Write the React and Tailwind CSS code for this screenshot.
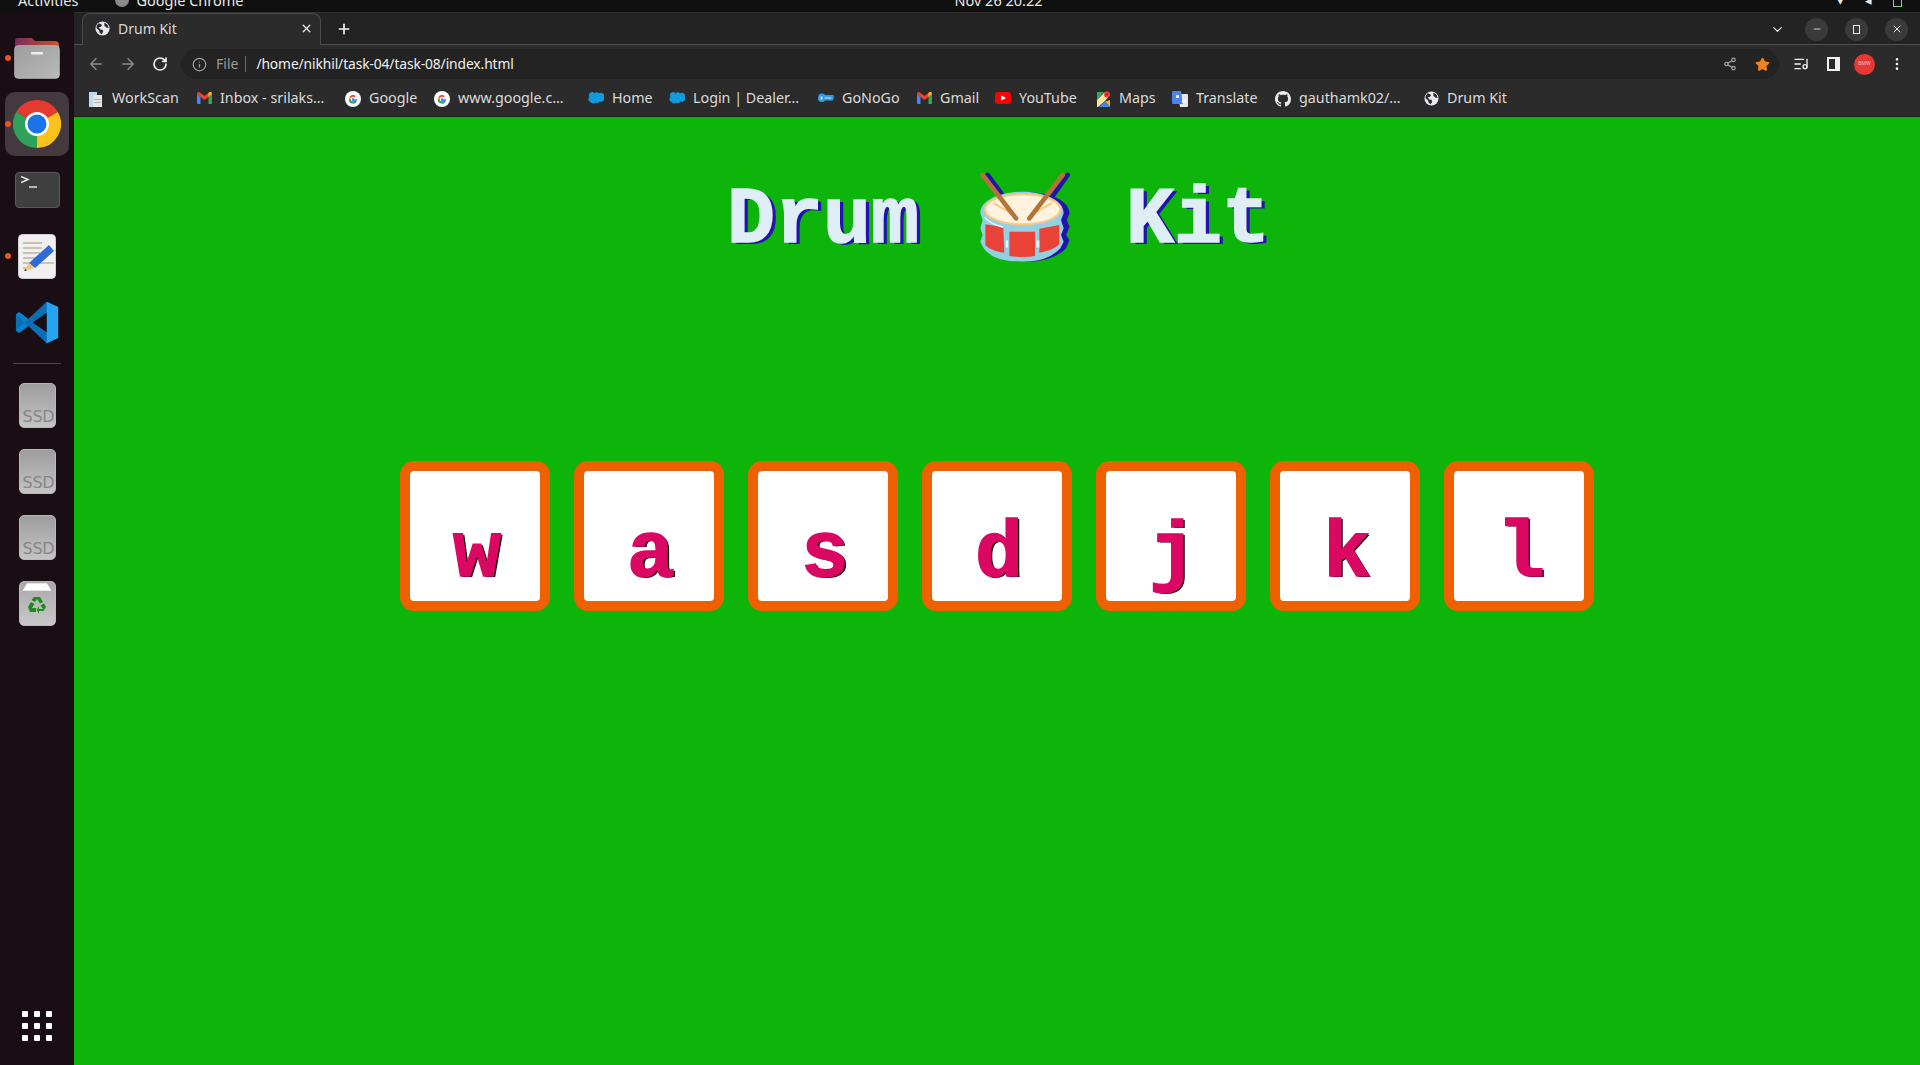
import React from 'react'
import { ArrowLeft, ArrowRight, RotateCw, Info, ChevronDown, Minus, X, Plus, Share2, Star, ListMusic, EllipsisVertical } from 'lucide-react'

const keys = ['w', 'a', 's', 'd', 'j', 'k', 'l']

const Globe = ({ size = 15 }) => (
  <svg width={size} height={size} viewBox="0 0 16 16" className="shrink-0">
    <circle cx="8" cy="8" r="7.5" fill="#e8eaed" />
    <path d="M4 2.5 7.5 4 6.5 6 4.2 6.6 5.5 9 8 9.4 8.8 11.5 7 14 5 12.5 4.4 10 1.5 7.5 2 4.5ZM10 1.5 13.5 4 14.5 7.5 12 7 10 5Z" fill="#2b2b2b" />
  </svg>
)

const GoogleIcon = () => (
  <svg width="16" height="16" viewBox="0 0 16 16" className="shrink-0">
    <circle cx="8" cy="8" r="8" fill="#fff" />
    <path d="M8 7v2.2h3.1A3.2 3.2 0 0 1 4.8 8" fill="none" stroke="#4285f4" strokeWidth="1.7" />
    <path d="M4.8 8c0 1.8 1.4 3.2 3.2 3.2 1 0 1.8-.4 2.3-1" fill="none" stroke="#34a853" strokeWidth="1.7" />
    <path d="M4.8 8c0-.5.1-.9.3-1.4" fill="none" stroke="#fbbc05" strokeWidth="1.7" />
    <path d="M5.1 6.6A3.2 3.2 0 0 1 10.2 5.7" fill="none" stroke="#ea4335" strokeWidth="1.7" />
  </svg>
)

const GmailIcon = () => (
  <svg width="15" height="12" viewBox="0 0 15 12" className="shrink-0">
    <path d="M0 2v9a1 1 0 0 0 1 1h2.5V5Z" fill="#4285f4" />
    <path d="M15 2v9a1 1 0 0 1-1 1h-2.500V5Z" fill="#34a853" />
    <path d="M0 2c0-2 2-2.500 3-1.500L7.500 4 12 .5c1-1 3-.5 3 1.500L11.500 5 7.500 8 3.500 5Z" fill="#ea4335" />
    <path d="M12 .5c1-1 3-.5 3 1.500L11.500 5V1Z" fill="#fbbc05" />
  </svg>
)

const SalesforceIcon = () => (
  <svg width="16" height="12" viewBox="0 0 16 12" className="shrink-0">
    <path d="M6.500 1.500A3 3 0 0 1 11 1.200 3.500 3.500 0 0 1 16 5.500 3.300 3.300 0 0 1 11.500 9.500 2.800 2.800 0 0 1 7.500 10.500 3 3 0 0 1 2.500 10 2.800 2.800 0 0 1 1.500 5 3 3 0 0 1 6.500 1.500Z" fill="#0f9bdf" />
  </svg>
)

const bookmarks = [
  { label: 'WorkScan', width: 'w-[109px]', icon: (
    <svg width="16" height="16" viewBox="0 0 16 16" className="shrink-0">
      <path d="M1 1h8v15H1Z" fill="#bcd7ee" /><path d="M5 4h9v12H5Z" fill="#e6e6e6" /><path d="M6 8h7v1H6ZM6 11h7v1H6Z" fill="#a9b7c2" />
    </svg>
  ) },
  { label: 'Inbox - srilaks…', width: 'w-[148px]', icon: <GmailIcon /> },
  { label: 'Google', width: 'w-[89px]', icon: <GoogleIcon /> },
  { label: 'www.google.c…', width: 'w-[154px]', icon: <GoogleIcon /> },
  { label: 'Home', width: 'w-[81px]', icon: <SalesforceIcon /> },
  { label: 'Login | Dealer…', width: 'w-[149px]', icon: <SalesforceIcon /> },
  { label: 'GoNoGo', width: 'w-[99px]', icon: (
    <svg width="16" height="10" viewBox="0 0 16 10" className="shrink-0">
      <path d="M1 1.500C3 0 6 .5 7 2h8.500c.5 2 .5 4-1 5.500H7C5.500 9.500 2 9.500 .5 7.500-.3 6 0 3 1 1.500Z" fill="#2e9ae6" />
      <path d="M2.500 3.500h2v3h-2ZM6.500 4.500h7v1h-7Z" fill="#cfe9fb" />
    </svg>
  ) },
  { label: 'Gmail', width: 'w-[78px]', icon: <GmailIcon /> },
  { label: 'YouTube', width: 'w-[101px]', icon: (
    <svg width="16" height="12" viewBox="0 0 16 12" className="shrink-0">
      <rect width="16" height="12" rx="3" fill="#f00" /><path d="M6 3.200 11 6 6 8.800Z" fill="#fff" />
    </svg>
  ) },
  { label: 'Maps', width: 'w-[76px]', icon: (
    <svg width="15" height="16" viewBox="0 0 15 16" className="shrink-0">
      <path d="M1 1h7L1 9Z" fill="#34a853" /><path d="M1 9l8-8 5 3-5 6-7 6H1Z" fill="#fbe7a0" /><path d="M9 10l5 6H3Z" fill="#4285f4" /><path d="M14 9v7L9.500 10.500Z" fill="#fbbc05" />
      <circle cx="11" cy="3.500" r="3" fill="#ea4335" /><circle cx="11" cy="3.500" r="1" fill="#9c1b12" />
    </svg>
  ) },
  { label: 'Translate', width: 'w-[103px]', icon: (
    <svg width="16" height="16" viewBox="0 0 16 16" className="shrink-0">
      <path d="M6 3h9a1 1 0 0 1 1 1v11a1 1 0 0 1-1 1H8Z" fill="#e4e7ea" /><path d="M1 0h8l2 13H1a1 1 0 0 1-1-1V1a1 1 0 0 1 1-1Z" fill="#4a85ec" />
      <path d="M4 4h3v3H4ZM10 8h4v4h-4Z" fill="#e8eefc" />
    </svg>
  ) },
  { label: 'gauthamk02/…', width: 'w-[149px]', icon: (
    <svg width="16" height="16" viewBox="0 0 16 16" className="shrink-0">
      <path fill="#e8eaed" d="M8 0C3.580 0 0 3.580 0 8c0 3.540 2.290 6.530 5.470 7.590.4.070.55-.17.55-.38 0-.19-.01-.82-.01-1.490-2.010.37-2.530-.49-2.690-.94-.09-.23-.48-.94-.82-1.130-.28-.15-.68-.52-.01-.53.630-.01 1.080.58 1.230.82.720 1.210 1.870.87 2.330.66.070-.52.280-.87.510-1.070-1.780-.2-3.640-.89-3.640-3.950 0-.87.310-1.590.820-2.150-.08-.2-.36-1.020.08-2.120 0 0 .67-.21 2.200.82.640-.18 1.320-.27 2-.27s1.360.09 2 .27c1.530-1.040 2.200-.82 2.200-.82.440 1.100.16 1.920.08 2.120.51.560.82 1.270.82 2.150 0 3.070-1.870 3.750-3.650 3.950.290.250.540.730.540 1.480 0 1.070-.010 1.930-.010 2.200 0 .210.150.460.550.380A8.010 8.010 0 0 0 16 8c0-4.420-3.580-8-8-8Z" />
    </svg>
  ) },
  { label: 'Drum Kit', width: 'w-[90px]', icon: <Globe /> },
]

const FolderIcon = () => (
  <svg width="46" height="42" viewBox="0 0 46 42">
    <path d="M1 4a3 3 0 0 1 3-3h14l3 3h20a4 4 0 0 1 4 4v10H1Z" fill="url(#folderTop)" />
    <rect x="0.500" y="8.500" width="45" height="33" rx="4" fill="url(#folderBody)" stroke="#c9c9c9" strokeWidth="0.500" />
    <rect x="17" y="15" width="12" height="2.500" rx="1" fill="#eee" />
    <defs>
      <linearGradient id="folderTop" x1="0" x2="1"><stop offset="0" stopColor="#7a2a5e" /><stop offset="1" stopColor="#c9562c" /></linearGradient>
      <linearGradient id="folderBody" x1="0" y1="0" x2="1" y2="1"><stop offset="0" stopColor="#9d9d9d" /><stop offset="1" stopColor="#b9b9b9" /></linearGradient>
    </defs>
  </svg>
)

const ChromeIcon = () => (
  <svg width="48" height="48" viewBox="0 0 48 48">
    <path d="M24 24 3.200 12A24 24 0 0 1 44.800 12Z" fill="#e53a2f" />
    <path d="M24 24 44.800 12A24 24 0 0 1 24 48Z" fill="#fcc11a" />
    <path d="M24 24 24 48A24 24 0 0 1 3.200 12Z" fill="#2ea15a" />
    <circle cx="24" cy="24" r="12" fill="#fff" />
    <circle cx="24" cy="24" r="9.500" fill="#1a73e8" />
  </svg>
)

const TerminalIcon = () => (
  <div className="w-[45px] h-[36px] rounded-[4px] bg-[#3f3f3f] border border-[#5b5b5b] flex items-start pl-[5px] pt-[3px]">
    <svg width="16" height="14" viewBox="0 0 16 14">
      <path d="M0 .5 7 3.500 0 6.500" fill="none" stroke="#eee" strokeWidth="1.400" />
      <path d="M8 11h8" stroke="#eee" strokeWidth="1.400" />
    </svg>
  </div>
)

const EditorIcon = () => (
  <svg width="38" height="45" viewBox="0 0 38 45">
    <rect x="0.500" y="0.500" width="37" height="44" rx="4" fill="#f0f0f0" stroke="#cfcfcf" />
    <path d="M5 9h19M5 14h19M5 19h17M5 24h13M5 29h31M5 34h8" stroke="#c9c3b4" strokeWidth="2.200" />
    <path d="M31 11 36 17 17 34 11 29Z" fill="#2f6bd6" />
    <path d="M11 29 17 34 6 37Z" fill="#f0c08a" />
    <path d="M7.500 35 9 36.700 6 37Z" fill="#333" />
  </svg>
)

const VSCodeIcon = () => (
  <svg width="44" height="45" viewBox="0 0 100 100">
    <path d="M72 3 30 42 11 27 2 32v36l9 5 19-15 42 39 26-12V15Z" fill="#0b6fb4" />
    <path d="M72 3v94l26-12V15Z" fill="#24a4f1" />
    <path d="M72 28 40 50l32 22Z" fill="#190e14" />
    <path d="M2 32 9 26 30 42 22 50ZM2 68 9 74 30 58 22 50Z" fill="#0a82cf" />
  </svg>
)

const DriveIcon = () => (
  <div className="w-[37px] h-[45px] rounded-[5px] bg-gradient-to-b from-[#9d9d9d] to-[#c4c4c4] border border-[#b8b8b8] flex items-end justify-end overflow-hidden">
    <span className="font-['DejaVu_Sans'] text-[16px] leading-[20px] text-[#878787] tracking-[-0.200px]">SSD</span>
  </div>
)

const TrashIcon = () => (
  <div className="w-[37px] h-[45px] rounded-[5px] bg-gradient-to-b from-[#a9a9a9] to-[#c8c8c8] border border-[#b8b8b8] flex flex-col items-center">
    <svg width="30" height="8" viewBox="0 0 30 8" className="mt-[1px]">
      <path d="M5 0h20l5 8H0Z" fill="#fff" stroke="#999" strokeWidth="0.500" />
    </svg>
    <svg width="20" height="20" viewBox="0 0 20 20" className="mt-[5px]">
      <path d="M7 1h6l3 5-3 1.500L10 3 8 6 4.500 4ZM1 11l3-5 3.500 2L5 12h4v4H3ZM19 11l-2-3.500-3.500 2L16 13l-4 0v-2.500L9.500 14l2.500 3.500V15h4.500Z" fill="#1f8a1f" />
    </svg>
  </div>
)

const DockItem = ({ children, active, dot }) => (
  <div className="relative h-[66px] w-[74px] flex items-center justify-center">
    {active && <div className="absolute left-[5px] top-[1px] w-[64px] h-[64px] rounded-[10px] bg-[#44393e]" />}
    {dot && <div className="absolute left-[5px] top-[30px] w-[6px] h-[6px] rounded-full bg-[#e95420]" />}
    <div className="relative flex">{children}</div>
  </div>
)

const Dock = () => (
  <aside className="w-[74px] shrink-0 bg-[#190e14] flex flex-col pt-[13px]">
    <DockItem dot><FolderIcon /></DockItem>
    <DockItem active dot><ChromeIcon /></DockItem>
    <DockItem><TerminalIcon /></DockItem>
    <DockItem dot><EditorIcon /></DockItem>
    <DockItem><VSCodeIcon /></DockItem>
    <div className="h-[17px] flex items-center justify-center">
      <div className="w-[48px] h-px bg-[#4d474a]" />
    </div>
    <DockItem><DriveIcon /></DockItem>
    <DockItem><DriveIcon /></DockItem>
    <DockItem><DriveIcon /></DockItem>
    <DockItem><TrashIcon /></DockItem>
    <div className="mt-auto mb-[24px] mx-auto grid grid-cols-3 gap-[6px]">
      {Array.from({ length: 9 }).map((_, i) => (
        <div key={i} className="w-[6px] h-[6px] rounded-[1px] bg-white" />
      ))}
    </div>
  </aside>
)

const Browser = () => (
  <div className="bg-[#2b2b2b] font-['Noto_Sans',sans-serif] text-[#e8eaed]">
    <div className="relative h-[33px] bg-[#232323] border-t border-[#303030] flex items-end">
      <div className="absolute left-0 right-0 bottom-0 h-px bg-[#525252]" />
      <div className="relative ml-[8px] w-[239px] h-[32px] bg-[#2b2b2b] rounded-t-[8px] border border-b-0 border-[#4a4a4a] flex items-center pl-[12px] pr-[6px] pb-[2px]">
        <Globe />
        <span className="ml-[8px] text-[14px] text-[#d8d8d8] leading-none">Drum Kit</span>
        <X size={13} strokeWidth={2.500} className="ml-auto mr-[1px] text-[#e8eaed]" />
      </div>
      <Plus size={16} strokeWidth={2.500} className="ml-[15px] mb-[8px] text-[#f4f4f4]" />
      <div className="ml-auto flex items-center h-full pr-[12px]">
        <ChevronDown size={15} className="mr-[20px] text-[#e8eaed]" />
        <div className="w-[23px] h-[23px] rounded-full bg-[#3a3a3a] flex items-center justify-center mr-[17px]"><Minus size={10} strokeWidth={2} /></div>
        <div className="w-[23px] h-[23px] rounded-full bg-[#3a3a3a] flex items-center justify-center mr-[17px]">
          <div className="w-[7px] h-[9px] border border-[#e8eaed]" />
        </div>
        <div className="w-[23px] h-[23px] rounded-full bg-[#3a3a3a] flex items-center justify-center"><X size={12} strokeWidth={2} /></div>
      </div>
    </div>
    <div className="h-[35px] flex items-center pl-[13px] pt-[3px]">
      <ArrowLeft size={18} className="text-[#8b8b8b]" />
      <ArrowRight size={18} className="ml-[14px] text-[#8b8b8b]" />
      <RotateCw size={16} strokeWidth={2.500} className="ml-[15px] text-[#f0f0f0]" />
      <div className="ml-[13px] w-[1598px] h-[30px] rounded-full bg-[#232323] flex items-center pl-[11px] pr-[9px]">
        <Info size={15} className="text-[#a0a0a0]" />
        <span className="ml-[9px] text-[14px] text-[#9a9a9a] leading-none">File</span>
        <div className="ml-[7px] w-px h-[16px] bg-[#6d6d6d]" />
        <span className="ml-[10px] text-[13.800px] text-[#f0f0f0] leading-none tracking-[-0.100px]">/home/nikhil/task-04/task-08/index.html</span>
        <Share2 size={14} className="ml-auto text-[#a8a8a8]" />
        <Star size={15} fill="#f4801f" className="ml-[18px] text-[#f4801f]" />
      </div>
      <ListMusic size={16} className="ml-[14px] text-[#f0f0f0]" />
      <div className="ml-[18px] w-[13px] h-[14px] border-2 border-[#f0f0f0] border-r-[5px]" />
      <div className="ml-[14px] w-[21px] h-[21px] rounded-full bg-[#e53935] flex items-center justify-center text-[5px] text-[#f4c4c4]">BMW</div>
      <EllipsisVertical size={16} className="ml-[14px] text-[#f0f0f0]" />
    </div>
    <div className="h-[37px] flex items-center pl-[14px] pt-[1px] border-b border-[#1c1c1c]">
      {bookmarks.map((b) => (
        <div key={b.label} className={`${b.width} flex items-center gap-[8px]`}>
          {b.icon}
          <span className="text-[14.300px] text-[#dcdcdc] leading-none whitespace-nowrap">{b.label}</span>
        </div>
      ))}
    </div>
  </div>
)

const DrumEmoji = () => (
  <svg width="130" height="110" viewBox="0 0 390 330" className="shrink-0">
    <g fill="#2412b0" stroke="#2412b0">
      <path d="M110 45 165 120M350 45 300 115" fill="none" strokeWidth="14" strokeLinecap="round" />
      <path d="M100 160C100 115 170 97 225 97 280 97 355 115 355 160L347 180 355 200 345 225 355 240 345 265C315 295 265 305 225 305 170 305 130 295 102 265Z" />
    </g>
    <path d="M88 160C88 115 160 95 215 95 270 95 338 115 338 160L330 180 338 205 330 225 338 245 328 265C300 295 260 305 215 305 160 305 120 295 98 265L88 245 95 225 88 205 95 180Z" fill="#94cfe3" />
    <ellipse cx="215" cy="148" rx="113" ry="45" fill="#fff3e0" stroke="#fcc97f" strokeWidth="6" />
    <path d="M103 193 157 202 160 278C135 275 115 268 103 255ZM175 215H252V288C225 292 200 291 175 288ZM265 206 325 195V253C310 268 285 275 265 278Z" fill="#e84336" />
    <path d="M163 240h10v24h-10ZM255 240h10v24h-10Z" fill="#e8f6fb" stroke="#7fc0d6" strokeWidth="2" />
    <path d="M102 173C115 188 135 196 155 201" fill="none" stroke="#fff" strokeWidth="4" strokeLinecap="round" />
    <path d="M130 130 180 160M300 130 250 160" stroke="#fcc97f" strokeWidth="6" strokeLinecap="round" />
    <path d="M95 45 195 175M335 45 235 175" stroke="#b1753a" strokeWidth="14" strokeLinecap="round" />
  </svg>
)

const KeyButton = ({ letter }) => (
  <button className="w-[150px] h-[150px] shrink-0 rounded-[14px] border-[10px] border-[#ee6000] bg-white flex items-center justify-center pl-[4px] pt-[38px]">
    <span className="font-['Liberation_Mono',monospace] font-bold text-[80px] leading-none text-[#da0763] [-webkit-text-stroke:1.500px_#da0763] [text-shadow:2px_1px_0_#000]">{letter}</span>
  </button>
)

const App = () => (
  <div className="w-[1920px] h-[1065px] flex flex-col overflow-hidden bg-[#190e14]">
    <header className="h-[12px] shrink-0 bg-[#101010] overflow-hidden font-['Noto_Sans',sans-serif] text-[14.500px] leading-[20px] text-[#e8e8e8]">
      <div className="h-[20px] -mt-[10px] flex items-center pl-[18px] pr-[18px]">
        <span>Activities</span>
        <span className="ml-[37px] w-[14px] h-[14px] rounded-full bg-[#8a8a8a]" />
        <span className="ml-[7px]">Google Chrome</span>
        <span className="ml-[711px]">Nov 26  20:22</span>
        <span className="ml-auto flex items-center gap-[21px] text-[13px]">
          <span>▾</span><span>◂</span><span className="w-[9px] h-[14px] border border-[#8fd18f]" />
        </span>
      </div>
    </header>
    <div className="flex-1 flex min-h-0">
      <Dock />
      <div className="flex-1 flex flex-col min-w-0">
        <Browser />
        <main className="flex-1 bg-[#0db50a] flex flex-col items-center">
          <h1 className="mt-[43px] h-[110px] flex items-center justify-center pl-[3px] font-['Liberation_Mono',monospace] font-bold text-[80px] leading-none text-[#dfeef5] [-webkit-text-stroke:1.500px_#dfeef5] [text-shadow:4px_2px_0_#2412b0]">
            <span className="mt-[12px] w-[192px]">Drum</span>
            <span className="ml-[32px] flex"><DrumEmoji /></span>
            <span className="ml-[45px] mt-[12px] w-[144px]">Kit</span>
          </h1>
          <div className="mt-[191px] flex gap-[24px]">
            {keys.map((k) => <KeyButton key={k} letter={k} />)}
          </div>
        </main>
      </div>
    </div>
  </div>
)

export default App
